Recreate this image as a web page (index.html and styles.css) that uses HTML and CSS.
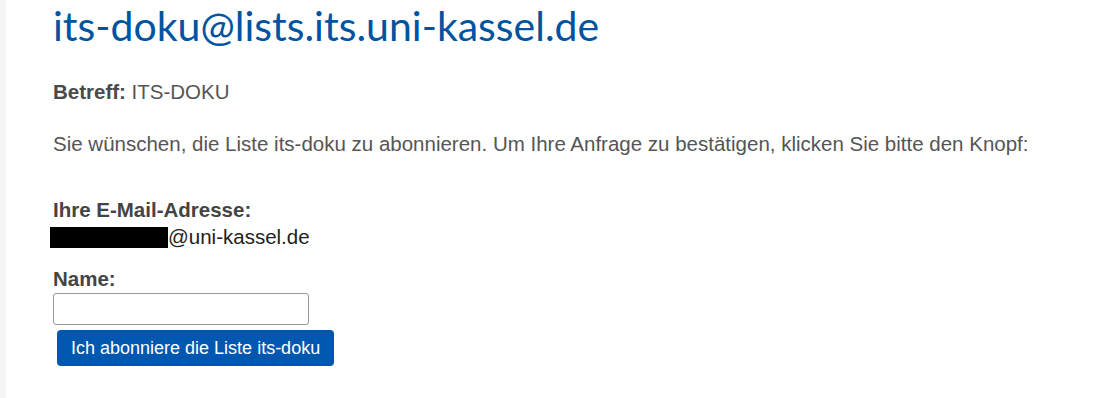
FILE: index.html
```html
<!DOCTYPE html>
<html lang="de">
<head>
    <meta charset="UTF-8">
    <title>its-doku@lists.its.uni-kassel.de</title>
    <link rel="stylesheet" href="styles.css">
</head>
<body>
    <div class="page">
        <h1 class="list-title">its-doku@lists.its.uni-kassel.de</h1>
        <p class="subject"><b>Betreff:</b> ITS-DOKU</p>
        <p class="intro">Sie wünschen, die Liste its-doku zu abonnieren. Um Ihre Anfrage zu bestätigen, klicken Sie bitte den Knopf:</p>
        <form class="subscribe">
            <div class="field">
                <label class="field-label">Ihre E-Mail-Adresse:</label>
                <div class="email"><span class="redacted"></span>@uni-kassel.de</div>
            </div>
            <div class="field">
                <label class="field-label" for="name">Name:</label>
                <input type="text" id="name" class="text-input">
            </div>
            <button type="button" class="btn-submit">Ich abonniere die Liste its-doku</button>
        </form>
    </div>
</body>
</html>
```

FILE: styles.css
```css
html, body {
    margin: 0;
    height: 100%;
}
body {
    font-family: "Liberation Sans", Arial, sans-serif;
    font-size: 20.5px;
    color: #555;
    background: #fff;
}
.page {
    border-left: 6px solid #f5f5f5;
    padding: 0 0 0 47px;
    min-height: 100%;
    box-sizing: border-box;
}
.list-title {
    margin: 0;
    padding-top: 2px;
    font-family: Lato, "Open Sans", sans-serif;
    font-weight: 400;
    font-size: 41px;
    line-height: 48px;
    color: #00549f;
}
.subject {
    margin: 30px 0 0;
    line-height: 24px;
}
.subject b { color: #4a4a4a; }
.intro {
    margin: 28px 0 0;
    line-height: 24px;
}
.subscribe { margin-top: 42px; }
.field-label {
    display: block;
    font-weight: bold;
    color: #444;
    line-height: 24px;
}
.email {
    color: #222;
    line-height: 24px;
    margin-top: 3px;
    margin-left: -3px;
    display: flex;
    align-items: center;
}
.redacted {
    display: inline-block;
    width: 118px;
    height: 21px;
    background: #000;
}
.field + .field { margin-top: 18px; }
.text-input {
    display: block;
    margin-top: 2px;
    width: 256px;
    height: 32px;
    box-sizing: border-box;
    border: 1px solid #999;
    border-radius: 3px;
    font-size: 16px;
}
.btn-submit {
    margin: 5px 0 0 4px;
    padding: 0 14px;
    height: 36px;
    background: #0057b0;
    color: #fff;
    border: none;
    border-radius: 4px;
    font-family: "Liberation Sans", Arial, sans-serif;
    font-size: 18px;
}
```
